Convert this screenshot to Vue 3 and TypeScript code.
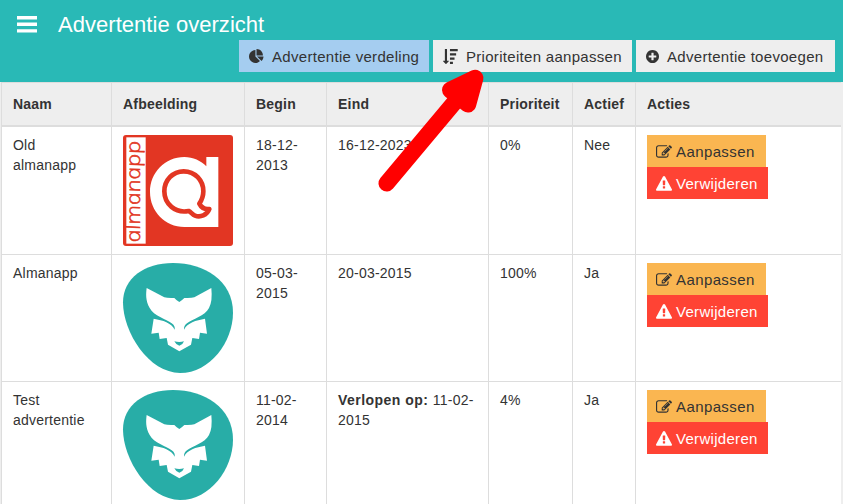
<script setup lang="ts">
interface Ad {
  name: string
  logo: 'almanapp' | 'fox'
  begin: string
  expired: boolean
  end: string
  priority: string
  active: string
}

const columns: string[] = ['Naam', 'Afbeelding', 'Begin', 'Eind', 'Prioriteit', 'Actief', 'Acties']

const ads: Ad[] = [
  { name: 'Old almanapp', logo: 'almanapp', begin: '18-12-2013', expired: false, end: '16-12-2023', priority: '0%', active: 'Nee' },
  { name: 'Almanapp', logo: 'fox', begin: '05-03-2015', expired: false, end: '20-03-2015', priority: '100%', active: 'Ja' },
  { name: 'Test advertentie', logo: 'fox', begin: '11-02-2014', expired: true, end: '11-02-2015', priority: '4%', active: 'Ja' },
]

const icons = {
  pie: 'M768 890l546 546q-106 108-247.5 168t-298.5 60q-209 0-385.5-103t-279.5-279.5-103-385.5 103-385.5 279.5-279.5 385.5-103v762zm187 6h773q0 157-60 298.5t-168 247.5zm709-128h-768v-768q209 0 385.5 103t279.5 279.5 103 385.5z',
  sort: 'M704 1440q0 12-10 24l-319 319q-10 9-23 9-12 0-23-9l-320-320q-15-16-7-35 8-20 30-20h192v-1376q0-14 9-23t23-9h192q14 0 23 9t9 23v1376h192q14 0 23 9t9 23zM832 0h928v256h-928zM832 512h736v256h-736zM832 1024h544v256h-544zM832 1536h352v256h-352z',
  plus: 'M1344 960v-128q0-26-19-45t-45-19h-256v-256q0-26-19-45t-45-19h-128q-26 0-45 19t-19 45v256h-256q-26 0-45 19t-19 45v128q0 26 19 45t45 19h256v256q0 26 19 45t45 19h128q26 0 45-19t19-45v-256h256q26 0 45-19t19-45zm320-64q0 209-103 385.5t-279.5 279.5-385.5 103-385.5-103-279.5-279.5-103-385.5 103-385.5 279.5-279.5 385.5-103 385.5 103 279.5 279.5 103 385.5z',
  edit: 'M888 1184l116-116-152-152-116 116v56h96v96h56zm440-720q-16-16-33 1l-350 350q-17 17-1 33t33-1l350-350q17-17 1-33zm80 594v190q0 119-84.5 203.5t-203.5 84.5h-832q-119 0-203.5-84.5t-84.5-203.5v-832q0-119 84.5-203.5t203.5-84.5h832q63 0 117 25 15 7 18 23 3 17-9 29l-49 49q-14 14-32 8-23-6-45-6h-832q-66 0-113 47t-47 113v832q0 66 47 113t113 47h832q66 0 113-47t47-113v-126q0-13 9-22l64-64q15-15 35-7t20 29zm-96-738l288 288-672 672h-288v-288zm444 132l-92 92-288-288 92-92q28-28 68-28t68 28l152 152q28 28 28 68t-28 68z',
  warning: 'M1024 1375v-190q0-14-9.5-23.5t-22.5-9.5h-192q-13 0-22.5 9.5t-9.5 23.5v190q0 14 9.5 23.5t22.5 9.5h192q13 0 22.5-9.5t9.5-23.5zm-2-374l18-459q0-12-10-19-13-11-24-11h-220q-11 0-24 11-10 7-10 21l17 457q0 10 10 16.5t24 6.5h185q14 0 23.5-6.5t10.5-16.5zm-14-934l768 1408q35 63-2 126-17 29-46.5 46t-63.5 17h-1536q-34 0-63.5-17t-46.5-46q-37-63-2-126l768-1408q17-31 47-49t65-18 65 18 47 49z',
}
</script>

<template>
  <div class="page">
    <header class="header">
      <div class="title-row">
        <svg class="menu" viewBox="0 0 20 17"><path d="M0 1.700h20M0 8.300h20M0 14.900h20" /></svg>
        <h1>Advertentie overzicht</h1>
      </div>
      <nav class="toolbar">
        <button class="tool blue" type="button">
          <svg class="icon" viewBox="0 0 1792 1792"><path :d="icons.pie" /></svg><span>Advertentie verdeling</span>
        </button>
        <button class="tool" type="button">
          <svg class="icon" viewBox="0 0 1792 1792"><path :d="icons.sort" /></svg><span>Prioriteiten aanpassen</span>
        </button>
        <button class="tool add" type="button">
          <svg class="icon" viewBox="128 128 1536 1536"><path :d="icons.plus" /></svg><span>Advertentie toevoegen</span>
        </button>
      </nav>
    </header>

    <table class="ads">
      <colgroup>
        <col class="c-name" /><col class="c-image" /><col class="c-begin" /><col class="c-end" />
        <col class="c-priority" /><col class="c-active" /><col class="c-actions" />
      </colgroup>
      <thead>
        <tr><th v-for="c in columns" :key="c">{{ c }}</th></tr>
      </thead>
      <tbody>
        <tr v-for="ad in ads" :key="ad.name">
          <td>{{ ad.name }}</td>
          <td>
            <svg v-if="ad.logo === 'almanapp'" class="logo tall" viewBox="0 0 330 333">
              <rect width="330" height="333" rx="9" fill="#e23623" />
              <rect x="10" y="7" width="58" height="319" fill="#fff" />
              <g transform="translate(52 319) rotate(-90) skewX(12)">
                <text class="brand" textLength="305" lengthAdjust="spacingAndGlyphs">almanapp</text>
              </g>
              <path d="M286 66V276H184C126 276 81 229 81 171C81 113 126 66 184 66C210 66 234 77 250 94V66Z" fill="#fff" />
              <path d="M182 109C216 109 241 136 241 169C241 184 236 196 229 206C235 218 244 224 259 222C252 241 232 248 216 242C208 239 204 231 197 228C157 236 124 207 124 169C124 136 149 109 182 109Z" fill="#fff" stroke="#e23623" stroke-width="14" stroke-linejoin="round" />
            </svg>
            <svg v-else class="logo" viewBox="0 0 330 330">
              <path d="M150 0C243 0 330 52 330 149C330 235 262 330 171 330C78 330 0 209 0 118C0 45 65 0 150 0Z" fill="#28ada7" />
              <path d="M71 75L124 103Q133 106 154 105Q160 112 169 117Q177 112 184 105Q205 106 214 103L265 75Q269 115 258 135C246 160 208 167 192 181Q182 188 183 200C193 179 219 172 246 167L252 212L231 209L228 228L208 225L204 245L169 265L135 245L131 225L110 228L107 209L85 212L92 167C120 172 145 179 155 200Q157 188 146 181C130 167 92 160 80 135C67 113 69 91 71 75Z" fill="#fff" />
              <path d="M154 235Q169 239 183 235L178 243L169 248L160 243Z" fill="#28ada7" />
            </svg>
          </td>
          <td>{{ ad.begin }}</td>
          <td><strong v-if="ad.expired">Verlopen op: </strong>{{ ad.end }}</td>
          <td>{{ ad.priority }}</td>
          <td>{{ ad.active }}</td>
          <td>
            <div class="actions">
              <button class="action edit" type="button">
                <svg class="icon" viewBox="0 0 1792 1792"><path :d="icons.edit" /></svg><span>Aanpassen</span>
              </button>
              <button class="action delete" type="button">
                <svg class="icon" viewBox="0 0 1792 1792"><path :d="icons.warning" /></svg><span>Verwijderen</span>
              </button>
            </div>
          </td>
        </tr>
      </tbody>
    </table>

    <svg class="arrow" viewBox="0 0 120 140">
      <path class="shaft" d="M26.700 123.300L104 31" />
      <path class="head" d="M115.200 18L90.200 30L108 44.300Z" />
    </svg>
  </div>
</template>

<style>
body {
  margin: 0;
  overflow: hidden;
}
</style>

<style scoped>
.page {
  position: relative;
  box-sizing: border-box;
  width: 843px;
  height: 504px;
  overflow: hidden;
  background: #eee;
  color: #333;
  font: 14px/20px "Liberation Sans", Arial, sans-serif;
  letter-spacing: 0.22px;
}
.header {
  display: flex;
  flex-direction: column;
  height: 82px;
  background: #29b9b6;
}
.title-row {
  display: flex;
  align-items: center;
  gap: 21px;
  height: 40px;
  padding: 4px 0 0 17px;
  box-sizing: border-box;
}
.menu {
  display: block;
  width: 20px;
  height: 17px;
  margin-top: 4px;
}
.menu path {
  stroke: #fff;
  stroke-width: 3.400;
}
h1 {
  margin: 5px 0 0;
  color: #fff;
  font-size: 22px;
  line-height: 26px;
  font-weight: 400;
  letter-spacing: 0.04px;
}
.toolbar {
  display: flex;
  justify-content: flex-end;
  gap: 4px;
  padding-right: 8px;
}
button {
  display: flex;
  align-items: center;
  box-sizing: border-box;
  height: 32px;
  margin: 0;
  border: 0;
  color: #333;
  font: 15px/20px "Liberation Sans", Arial, sans-serif;
  letter-spacing: 0.3px;
  white-space: nowrap;
}
button span {
  padding-top: 2px;
}
.icon {
  display: block;
  flex: none;
  width: 15px;
  height: 15px;
  fill: currentColor;
}
.tool {
  width: 199px;
  padding: 0 0 0 10px;
  gap: 8px;
  background: #eee;
}
.tool .icon {
  margin-top: 1px;
}
.tool.blue {
  width: 190px;
  background: #a5cdf0;
}
.tool.add .icon {
  width: 13px;
  height: 13px;
}
.ads {
  width: 840px;
  margin-left: 1px;
  table-layout: fixed;
  border-collapse: separate;
  border-spacing: 0;
  background: #fff;
}
.c-name { width: 110px; }
.c-image { width: 133px; }
.c-begin { width: 82px; }
.c-end { width: 162px; }
.c-priority { width: 84px; }
.c-active { width: 63px; }
.c-actions { width: 206px; }
th,
td {
  box-sizing: border-box;
  padding: 8px 11px;
  border-left: 1px solid #ddd;
  border-bottom: 1px solid #ddd;
  text-align: left;
  vertical-align: top;
}
th {
  height: 45px;
  padding: 11px 0 11px 11px;
  border-top: 1px solid #ddd;
  border-bottom-width: 2px;
  background: #eee;
  letter-spacing: 0.2px;
}
strong {
  letter-spacing: 0.47px;
}
.logo {
  display: block;
  width: 110px;
  height: 110px;
  overflow: visible;
}
.logo.tall {
  height: 111px;
}
.brand {
  fill: #e23623;
  stroke: #e23623;
  stroke-width: 1.500;
  font: italic 300 58px "Open Sans", "Noto Sans", sans-serif;
  letter-spacing: 0;
}
.actions {
  display: flex;
  flex-direction: column;
  align-items: flex-start;
}
.action {
  padding: 0 0 0 9px;
  gap: 4px;
}
.action .icon {
  width: 16px;
  height: 16px;
  margin-top: 1px;
}
.edit {
  width: 119px;
  background: #fab651;
  letter-spacing: 0.4px;
}
.delete {
  width: 121px;
  background: #ff4334;
  color: #fff;
}
.arrow {
  position: absolute;
  left: 360px;
  top: 60px;
  width: 120px;
  height: 140px;
  overflow: visible;
  pointer-events: none;
}
.arrow path {
  stroke: #f00;
  stroke-width: 16.500;
  stroke-linecap: round;
  stroke-linejoin: round;
  fill: #f00;
}
</style>
